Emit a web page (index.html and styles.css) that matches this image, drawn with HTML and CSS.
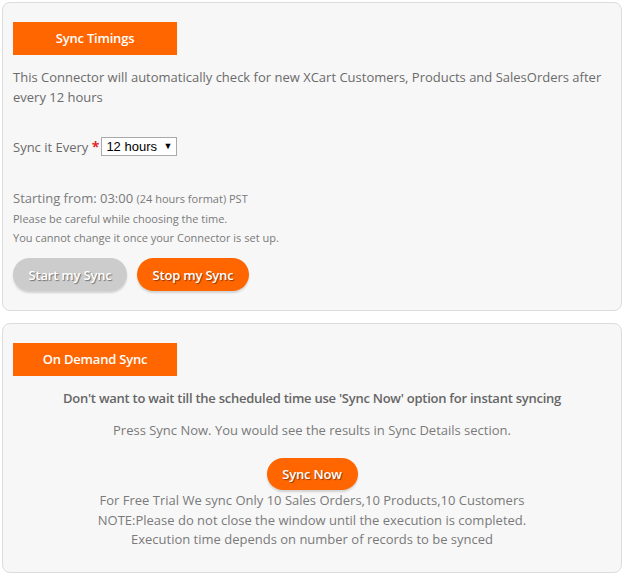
FILE: index.html
```html
<!DOCTYPE html>
<html>
<head>
<meta charset="utf-8">
<link rel="stylesheet" href="styles.css">
</head>
<body>
<div class="page">
  <section class="panel panel-timings">
    <div class="panel-title">Sync Timings</div>
    <p class="intro">This Connector will automatically check for new XCart Customers, Products and SalesOrders after every 12 hours</p>
    <div class="field">
      <label class="field-label">Sync it Every <span class="req">*</span></label>
      <span class="select-wrap">
        <select class="select"><option>12 hours</option></select>
        <span class="arrow">&#9660;</span>
      </span>
    </div>
    <div class="start">Starting from: 03:00 <span class="small">(24 hours format) PST</span></div>
    <div class="note">Please be careful while choosing the time.</div>
    <div class="note">You cannot change it once your Connector is set up.</div>
    <div class="actions">
      <button class="btn btn-gray">Start my Sync</button>
      <button class="btn btn-orange">Stop my Sync</button>
    </div>
  </section>
  <section class="panel panel-demand">
    <div class="panel-title">On Demand Sync</div>
    <p class="lead">Don't want to wait till the scheduled time use 'Sync Now' option for instant syncing</p>
    <p class="press">Press Sync Now. You would see the results in Sync Details section.</p>
    <div class="center"><button class="btn btn-orange btn-now">Sync Now</button></div>
    <div class="info">
      <div>For Free Trial We sync Only 10 Sales Orders,10 Products,10 Customers</div>
      <div>NOTE:Please do not close the window until the execution is completed.</div>
      <div>Execution time depends on number of records to be synced</div>
    </div>
  </section>
</div>
</body>
</html>
```
FILE: styles.css
```css
* { box-sizing: border-box; }
body {
  margin: 0;
  background: #ffffff;
  font-family: "Open Sans", "Noto Sans", sans-serif;
  color: #6b6b6b;
}
.page {
  padding: 2px 5px 0 2px;
  display: flex;
  flex-direction: column;
  gap: 12px;
}
.panel {
  background: #f7f7f7;
  border: 1px solid #dcdcdc;
  border-radius: 8px;
  padding: 19px 10px 0 10px;
}
.panel-timings { height: 309px; }
.panel-demand { height: 250px; }
.panel-title {
  width: 164px;
  height: 33px;
  background: #ff6600;
  color: #fff;
  font-size: 13px;
  font-weight: 600;
  line-height: 33px;
  text-align: center;
  letter-spacing: -0.2px;
}
.intro {
  margin: 12px 0 0 0;
  font-size: 13px;
  line-height: 20px;
}
.field {
  margin-top: 29px;
  display: flex;
  align-items: center;
  gap: 2px;
  height: 20px;
}
.field-label { font-size: 13px; }
.req { color: #e3262b; font-weight: 700; font-size: 14px; }
.select-wrap {
  position: relative;
  display: inline-block;
}
.select {
  appearance: none;
  -webkit-appearance: none;
  font-family: "Liberation Sans", Arial, sans-serif;
  font-size: 13px;
  color: #000;
  height: 19px;
  width: 76px;
  border: 1px solid #a9a9a9;
  background: #fff;
  padding: 0 0 0 4px;
  border-radius: 0;
  line-height: 17px;
  display: block;
}
.arrow {
  position: absolute;
  right: 5px;
  top: 3px;
  font-size: 9px;
  color: #000;
  line-height: 12px;
  pointer-events: none;
}
.start {
  margin-top: 32px;
  font-size: 13px;
  line-height: 20px;
  color: #7a7a7a;
}
.start .small { font-size: 11px; }
.note {
  font-size: 11px;
  line-height: 19px;
  color: #7a7a7a;
}
.actions {
  margin-top: 11px;
  display: flex;
  gap: 10px;
}
.btn {
  height: 33px;
  border: none;
  border-radius: 17px;
  font-family: "Open Sans", "Noto Sans", sans-serif;
  font-size: 13px;
  font-weight: 600;
  color: #fff;
  text-shadow: 1px 1px 1px rgba(0,0,0,0.45);
  box-shadow: 0 2px 2px rgba(0,0,0,0.15);
  padding: 0;
  letter-spacing: -0.2px;
}
.btn-gray { background: #cccccc; width: 114px; }
.btn-orange { background: #ff6600; width: 112px; }
.btn-now { width: 91px; height: 32px; }
.lead {
  margin: 12px 0 0 0;
  text-align: center;
  font-size: 13px;
  font-weight: 600;
  line-height: 20px;
  color: #666;
  letter-spacing: -0.25px;
}
.press {
  margin: 12px 0 0 0;
  text-align: center;
  font-size: 13px;
  line-height: 20px;
  color: #7a7a7a;
}
.center {
  margin-top: 18px;
  display: flex;
  justify-content: center;
}
.info {
  text-align: center;
  font-size: 13px;
  line-height: 19.5px;
  color: #7a7a7a;
  margin-top: 1px;
}
```
